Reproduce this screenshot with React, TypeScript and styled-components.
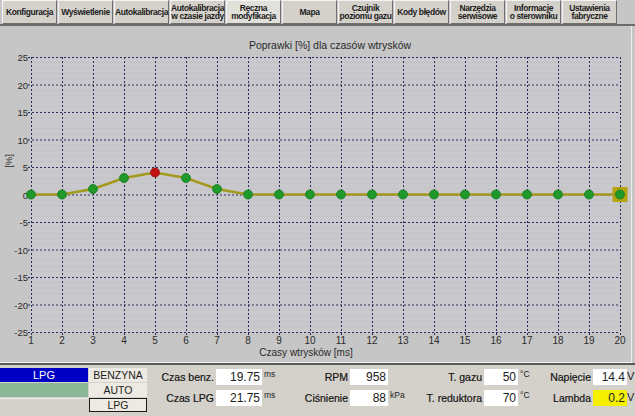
import React from 'react';
import styled, { createGlobalStyle } from 'styled-components';

const GlobalStyle = createGlobalStyle`
	html, body {
		margin: 0;
		padding: 0;
		width: 635px;
		height: 416px;
		overflow: hidden;
		background: #bcbcbc;
		font-family: 'Liberation Sans', Arial, sans-serif;
	}
`;

const Page = styled.div`
	width: 635px;
	height: 416px;
	display: flex;
	flex-direction: column;
	background: #c6c6c6;
`;

const Toolbar = styled.div`
	display: flex;
	gap: 1px;
	height: 24px;
	padding-left: 2px;
	border-bottom: 2px solid #6c6c6c;
	background: #c6c6c6;
`;

const TabButton = styled.button<{ $active?: boolean }>`
	width: 55px;
	height: 24px;
	padding: 0;
	margin: 0;
	display: flex;
	align-items: center;
	justify-content: center;
	text-align: center;
	font-family: 'Liberation Sans', Arial, sans-serif;
	font-weight: bold;
	font-size: 8.5px;
	line-height: 8.5px;
	letter-spacing: -0.4px;
	color: #1c1c1c;
	background: ${(p) => (p.$active ? '#e2e0da' : '#d4d1cb')};
	border: 1px solid;
	border-color: #f4f4f4 #707070 #707070 #f4f4f4;
	box-sizing: border-box;
`;

const ChartPanel = styled.div`
	width: 632px;
	height: 337px;
	background: #c6c6c6;
	border-right: 1px solid #eeeeee;
	border-bottom: 1px solid #f2f2f2;
	box-sizing: border-box;
`;

const StatusPanel = styled.div`
	flex: 1;
	display: flex;
	align-items: flex-start;
	background: #d4d1cb;
	border-top: 2px solid #5a5a5a;
`;

const ModeBlock = styled.div`
	width: 88px;
	margin-top: 3px;
	display: flex;
	flex-direction: column;
`;

const ModeRow = styled.div<{ $bg: string; $sunken?: boolean }>`
	height: 14px;
	margin-bottom: 1px;
	display: flex;
	align-items: center;
	justify-content: center;
	background: ${(p) => p.$bg};
	color: #ffffff;
	font-size: 11px;
	border-top: ${(p) => (p.$sunken ? '1px solid #f0f0f0' : 'none')};
	box-sizing: border-box;
`;

const ModeButtons = styled.div`
	width: 58px;
	margin-left: 1px;
	margin-top: 3px;
	display: flex;
	flex-direction: column;
`;

const ModeButton = styled.div<{ $selected?: boolean }>`
	height: 14px;
	margin-bottom: 1px;
	display: flex;
	align-items: center;
	justify-content: center;
	background: #eceae2;
	color: #1c1c1c;
	font-size: 10.5px;
	border: 1px solid ${(p) => (p.$selected ? '#1a1a1a' : 'transparent')};
	box-sizing: border-box;
`;

const FieldGroup = styled.div<{ $label: number; $box: number; $unit: number }>`
	display: grid;
	grid-template-columns: ${(p) => `${p.$label}px ${p.$box}px ${p.$unit}px`};
	grid-auto-rows: 16px;
	row-gap: 5px;
	margin-top: 4px;
`;

const Label = styled.div`
	text-align: right;
	padding-right: 2px;
	font-size: 10.5px;
	line-height: 16px;
	color: #141414;
	white-space: nowrap;
	-webkit-text-stroke: 0.2px #141414;
`;

const ValueBox = styled.div<{ $bg?: string }>`
	background: ${(p) => p.$bg || '#ffffff'};
	text-align: right;
	padding-right: 2px;
	font-size: 12px;
	line-height: 16px;
	color: #202020;
`;

const Unit = styled.div<{ $big?: boolean }>`
	font-size: ${(p) => (p.$big ? '11px' : '8.5px')};
	line-height: ${(p) => (p.$big ? '14px' : '10px')};
	padding-left: ${(p) => (p.$big ? '0' : '2px')};
	color: #202020;
	white-space: nowrap;
`;

const X0 = 31;
const DX = 31;
const Y0 = 168.5;
const DY = 5.5;
const xs = Array.from({ length: 20 }, (_, i) => i + 1);
const ys = [25, 20, 15, 10, 5, 0, -5, -10, -15, -20, -25];
const values = [0, 0, 1, 3, 4, 3, 1, 0, 0, 0, 0, 0, 0, 0, 0, 0, 0, 0, 0, 0];
const px = (i: number) => X0 + (i - 1) * DX;
const py = (v: number) => Y0 - v * DY;
const font = 'Liberation Sans, Arial, sans-serif';

const Chart = () => {
	const line = values.map((v, i) => `${px(i + 1)},${py(v)}`).join(' ');
	return (
		<svg width={632} height={336} style={{ display: 'block' }}>
			<rect x={X0} y={py(25)} width={DX * 19} height={DY * 50} fill="#c9c9cd" />
			{Array.from({ length: 51 }, (_, k) => 25 - k)
				.filter((v) => v % 5 !== 0)
				.map((v) => (
					<line key={`m${v}`} x1={X0} x2={px(20)} y1={py(v)} y2={py(v)} stroke="#c3c3c8" strokeWidth={1} />
				))}
			{ys.map((v) => (
				<line
					key={`h${v}`}
					x1={X0 - 3}
					x2={px(20)}
					y1={py(v) + 0.5}
					y2={py(v) + 0.5}
					stroke="#2c2c5c"
					strokeWidth={1}
					strokeDasharray="2 2"
				/>
			))}
			{xs.map((i) => (
				<line
					key={`v${i}`}
					x1={px(i) + 0.5}
					x2={px(i) + 0.5}
					y1={py(25)}
					y2={py(-25) + 3}
					stroke="#2c2c5c"
					strokeWidth={1}
					strokeDasharray="2 2"
				/>
			))}
			<text x={330} y={23} textAnchor="middle" fontSize={10.5} fill="#2a2a2a" fontFamily={font}>
				Poprawki [%] dla czasów wtrysków
			</text>
			{ys.map((v) => (
				<text key={`yl${v}`} x={28} y={py(v) + 4} textAnchor="end" fontSize={9.5} fill="#2a2a2a" fontFamily={font}>
					{v}
				</text>
			))}
			<text x={0} y={0} transform="translate(12, 135) rotate(-90)" textAnchor="middle" fontSize={9.5} fill="#2a2a2a" fontFamily={font}>
				[%]
			</text>
			{xs.map((i) => (
				<text key={`xl${i}`} x={px(i)} y={318} textAnchor="middle" fontSize={10} fill="#2a2a2a" fontFamily={font}>
					{i}
				</text>
			))}
			<text x={306} y={330} textAnchor="middle" fontSize={10} fill="#2a2a2a" fontFamily={font}>
				Czasy wtrysków [ms]
			</text>
			<rect x={px(20) - 7.5} y={py(0) - 7.5} width={15} height={15} fill="#b4a410" />
			<polyline points={line} fill="none" stroke="#a39a1c" strokeWidth={2.5} />
			{values.map((v, i) => (
				<circle
					key={`p${i}`}
					cx={px(i + 1)}
					cy={py(v)}
					r={4.5}
					fill={i === 4 ? '#c41010' : '#1f9a2a'}
					stroke={i === 4 ? '#8a1010' : '#1a7a22'}
					strokeWidth={0.8}
				/>
			))}
		</svg>
	);
};

const tabs: React.ReactNode[] = [
	'Konfiguracja',
	'Wyświetlenie',
	'Autokalibracja',
	<>Autokalibracja<br />w czasie jazdy</>,
	<>Ręczna<br />modyfikacja</>,
	'Mapa',
	<>Czujnik<br />poziomu gazu</>,
	'Kody błędów',
	<>Narzędzia<br />serwisowe</>,
	<>Informacje<br />o sterowniku</>,
	<>Ustawienia<br />fabryczne</>,
];

export default function App() {
	return (
		<>
			<GlobalStyle />
			<Page>
				<Toolbar>
					{tabs.map((t, i) => (
						<TabButton key={i} $active={i === 4}>
							<span>{t}</span>
						</TabButton>
					))}
				</Toolbar>
				<ChartPanel>
					<Chart />
				</ChartPanel>
				<StatusPanel>
					<ModeBlock>
						<ModeRow $bg="#0000c4">LPG</ModeRow>
						<ModeRow $bg="#8cb796" />
						<ModeRow $bg="#d4d1cb" $sunken />
					</ModeBlock>
					<ModeButtons>
						<ModeButton>BENZYNA</ModeButton>
						<ModeButton>AUTO</ModeButton>
						<ModeButton $selected>LPG</ModeButton>
					</ModeButtons>
					<FieldGroup $label={69} $box={46} $unit={30}>
						<Label>Czas benz.</Label>
						<ValueBox>19.75</ValueBox>
						<Unit>ms</Unit>
						<Label>Czas LPG</Label>
						<ValueBox>21.75</ValueBox>
						<Unit>ms</Unit>
					</FieldGroup>
					<FieldGroup $label={58} $box={38} $unit={30}>
						<Label>RPM</Label>
						<ValueBox>958</ValueBox>
						<Unit />
						<Label>Ciśnienie</Label>
						<ValueBox>88</ValueBox>
						<Unit>kPa</Unit>
					</FieldGroup>
					<FieldGroup $label={66} $box={34} $unit={26}>
						<Label>T. gazu</Label>
						<ValueBox>50</ValueBox>
						<Unit>°C</Unit>
						<Label>T. reduktora</Label>
						<ValueBox>70</ValueBox>
						<Unit>°C</Unit>
					</FieldGroup>
					<FieldGroup $label={49} $box={34} $unit={8}>
						<Label>Napięcie</Label>
						<ValueBox>14.4</ValueBox>
						<Unit $big>V</Unit>
						<Label>Lambda</Label>
						<ValueBox $bg="#f4f000">0.2</ValueBox>
						<Unit $big>V</Unit>
					</FieldGroup>
				</StatusPanel>
			</Page>
		</>
	);
}
